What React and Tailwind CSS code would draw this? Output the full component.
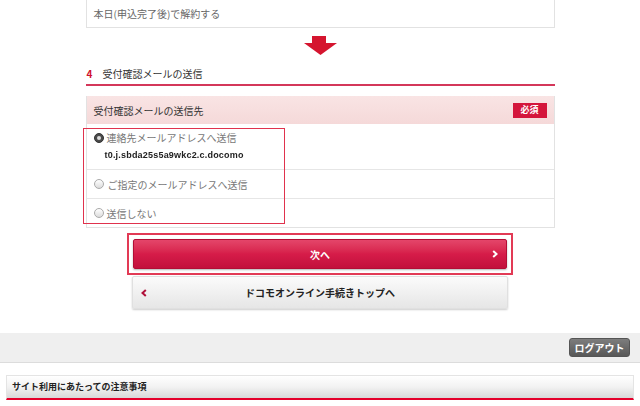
import React from "react";

const font = { fontFamily: "'Noto Sans CJK JP', 'Noto Sans', sans-serif" };

const Radio = ({ checked }) =>
  checked ? (
    <span className="w-[10px] h-[10px] rounded-full bg-[#4a4a4a] border border-[#333] flex items-center justify-center shrink-0">
      <span className="w-[4px] h-[4px] rounded-full bg-[#ddd]" />
    </span>
  ) : (
    <span className="w-[10px] h-[10px] rounded-full border border-[#aaa] bg-gradient-to-b from-white to-[#dcdcdc] shrink-0" />
  );

const Chevron = ({ dir, color }) => (
  <svg width="6" height="8" viewBox="0 0 6 8">
    <path
      d={dir === "right" ? "M1.2 1 L4.5 4 L1.2 7" : "M4.8 1 L1.5 4 L4.8 7"}
      fill="none"
      stroke={color}
      strokeWidth="2"
    />
  </svg>
);

const App = () => {
  return (
    <div className="w-[640px] h-[406px] bg-white overflow-hidden" style={font}>
      <div className="w-[469px] mx-auto">
        {/* previous section tail */}
        <div className="h-[28px] border-x border-b border-[#e2e2e2] flex items-center px-[7px] text-[10px] text-[#666]">
          本日(申込完了後)で解約する
        </div>

        {/* down arrow */}
        <div className="flex justify-center mt-[8px]">
          <svg width="33" height="19" viewBox="0 0 33 19">
            <rect x="8" y="0" width="14" height="8" fill="#d5152f" />
            <polygon points="0,7 33,7 16.5,19" fill="#d5152f" />
          </svg>
        </div>

        {/* section heading */}
        <div className="mt-[7px] h-[24px] flex items-center gap-[10px] px-[1px] border-b-2 border-[#d4375a] text-[10px]">
          <span className="text-[#d0102e] font-bold">4</span>
          <span className="text-[#333]">受付確認メールの送信</span>
        </div>

        {/* destination card */}
        <div className="relative mt-[10px] border-x border-b border-[#e2e2e2] text-[10px]">
          <div className="h-[28px] bg-gradient-to-b from-[#f9e4e4] to-[#f5d9d9] flex items-center justify-between px-[7px]">
            <span className="text-[#333]">受付確認メールの送信先</span>
            <span className="bg-[#d4163c] text-white font-bold text-[9px] w-[34px] h-[15px] flex items-center justify-center">
              必須
            </span>
          </div>
          <div className="h-[45px] flex flex-col justify-center gap-[4px] px-[7px]">
            <div className="flex items-center gap-[3px] text-[#777]">
              <Radio checked />
              <span>連絡先メールアドレスへ送信</span>
            </div>
            <div
              className="pl-[11px] text-[9px] font-bold text-[#222] tracking-[0.2px] blur-[0.3px]"
              style={{ fontFamily: "'Liberation Sans', sans-serif" }}
            >
              t0.j.sbda25s5a9wkc2.c.docomo
            </div>
          </div>
          <div className="h-[29px] border-t border-[#e6e6e6] flex items-center gap-[4px] px-[7px] text-[#777]">
            <Radio />
            <span>ご指定のメールアドレスへ送信</span>
          </div>
          <div className="h-[29px] border-t border-[#e6e6e6] flex items-center gap-[3px] px-[7px] text-[#777]">
            <Radio />
            <span>送信しない</span>
          </div>

          {/* highlight frame over options */}
          <div className="absolute left-[-4px] top-[32px] w-[202px] h-[96px] border-[1.5px] border-[#e0324d]" />
        </div>

        {/* buttons */}
        <div className="mt-[5px] flex flex-col items-center">
          <div className="border-2 border-[#e23a55] p-[4px]">
            <button className="w-[374px] h-[30px] rounded-[2px] bg-gradient-to-b from-[#e4456a] via-[#d61c49] to-[#c2103c] border border-[#b30d35] text-white text-[10px] font-bold flex items-center justify-center relative shadow-[0_1px_2px_rgba(0,0,0,0.3)]">
              次へ
              <span className="absolute right-[8px] top-1/2 -translate-y-1/2 flex">
                <Chevron dir="right" color="#fff" />
              </span>
            </button>
          </div>
          <button className="mt-[1px] w-[376px] h-[33px] rounded-[2px] bg-gradient-to-b from-[#fbfbfb] to-[#e6e6e6] border border-[#e0e0e0] shadow-[0_1px_2px_rgba(0,0,0,0.2)] text-[#222] text-[10px] font-bold flex items-center justify-center relative">
            <span className="absolute left-[8px] top-1/2 -translate-y-1/2 flex">
              <Chevron dir="left" color="#b0103a" />
            </span>
            ドコモオンライン手続きトップへ
          </button>
        </div>
      </div>

      {/* footer band */}
      <div className="mt-[24px] h-[30px] bg-[#efefef] border-b border-[#dcdcdc] flex items-center justify-end pr-[10px]">
        <button className="w-[61px] h-[19px] rounded-[3px] bg-gradient-to-b from-[#7d7d7d] to-[#585858] border border-[#555] text-white text-[10px] font-bold flex items-center justify-center">
          ログアウト
        </button>
      </div>

      {/* notes header */}
      <div className="mx-[6px] mt-[12px] h-[25px] border border-[#e4e4e4] border-b-2 border-b-[#e4002b] bg-gradient-to-b from-white via-[#f2f2f2] to-[#d8d8d8] flex items-center px-[5px] text-[9px] font-bold text-[#222]">
        サイト利用にあたっての注意事項
      </div>
    </div>
  );
};

export default App;
